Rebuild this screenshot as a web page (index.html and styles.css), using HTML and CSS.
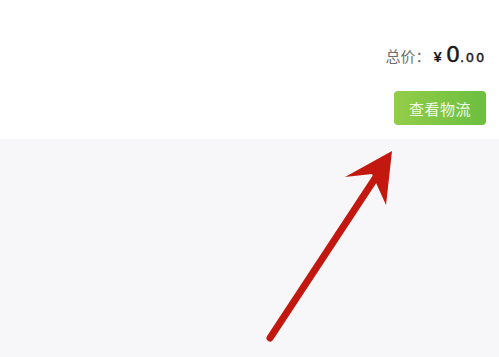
FILE: index.html
```html
<!DOCTYPE html>
<html lang="zh-CN">
<head>
  <meta charset="UTF-8" />
  <meta name="viewport" content="width=device-width, initial-scale=1.0" />
  <title>订单详情</title>
  <link rel="stylesheet" href="styles.css">
</head>
<body>
  <section class="order-footer">
    <div class="total">
      <span class="total-label">总价：</span>
      <span class="currency">¥</span>
      <span class="amount-int">0</span><span class="amount-dec">.00</span>
    </div>
    <div class="actions">
      <button class="btn-logistics">查看物流</button>
    </div>
  </section>
  <section class="blank">
    <svg class="hint-arrow" width="499" height="218" viewBox="0 0 499 218">
      <line x1="270" y1="199" x2="376" y2="38" stroke="#c2180f" stroke-width="7" stroke-linecap="round" />
      <polygon points="392,12 345,38 372,35 386,66" fill="#c2180f" />
    </svg>
  </section>
</body>
</html>
```

FILE: styles.css
```css
* {
  box-sizing: border-box;
  font-family: 'Liberation Sans', 'Noto Sans CJK SC', sans-serif;
}
body {
  margin: 0;
  background: #f7f7f9;
  width: 499px;
  height: 357px;
  overflow: hidden;
}
.order-footer {
  background: #fff;
  height: 139px;
  padding: 42px 13px 14px 0;
  display: flex;
  flex-direction: column;
  align-items: flex-end;
}
.total {
  display: flex;
  align-items: baseline;
  height: 25px;
  line-height: 25px;
  color: #1a1a1a;
}
.total-label {
  font-size: 15px;
  color: #6e6e6e;
  margin-right: 3px;
}
.currency {
  font-size: 15px;
  font-weight: bold;
  margin-right: 4px;
}
.amount-int {
  font-family: 'DejaVu Sans', sans-serif;
  font-size: 22px;
  -webkit-text-stroke: 0.5px #1a1a1a;
}
.amount-dec {
  font-family: 'DejaVu Sans', sans-serif;
  font-size: 13px;
  letter-spacing: 1.8px;
  -webkit-text-stroke: 0.4px #1a1a1a;
}
.actions {
  margin-top: 24px;
}
.btn-logistics {
  width: 92px;
  height: 34px;
  border: none;
  border-radius: 4px;
  background: linear-gradient(90deg, #93cd49, #6cbf3f);
  color: #f1f9e6;
  font-size: 15px;
  padding: 0;
  letter-spacing: 0.5px;
}
.blank {
  height: 218px;
}
.hint-arrow {
  display: block;
}
```
